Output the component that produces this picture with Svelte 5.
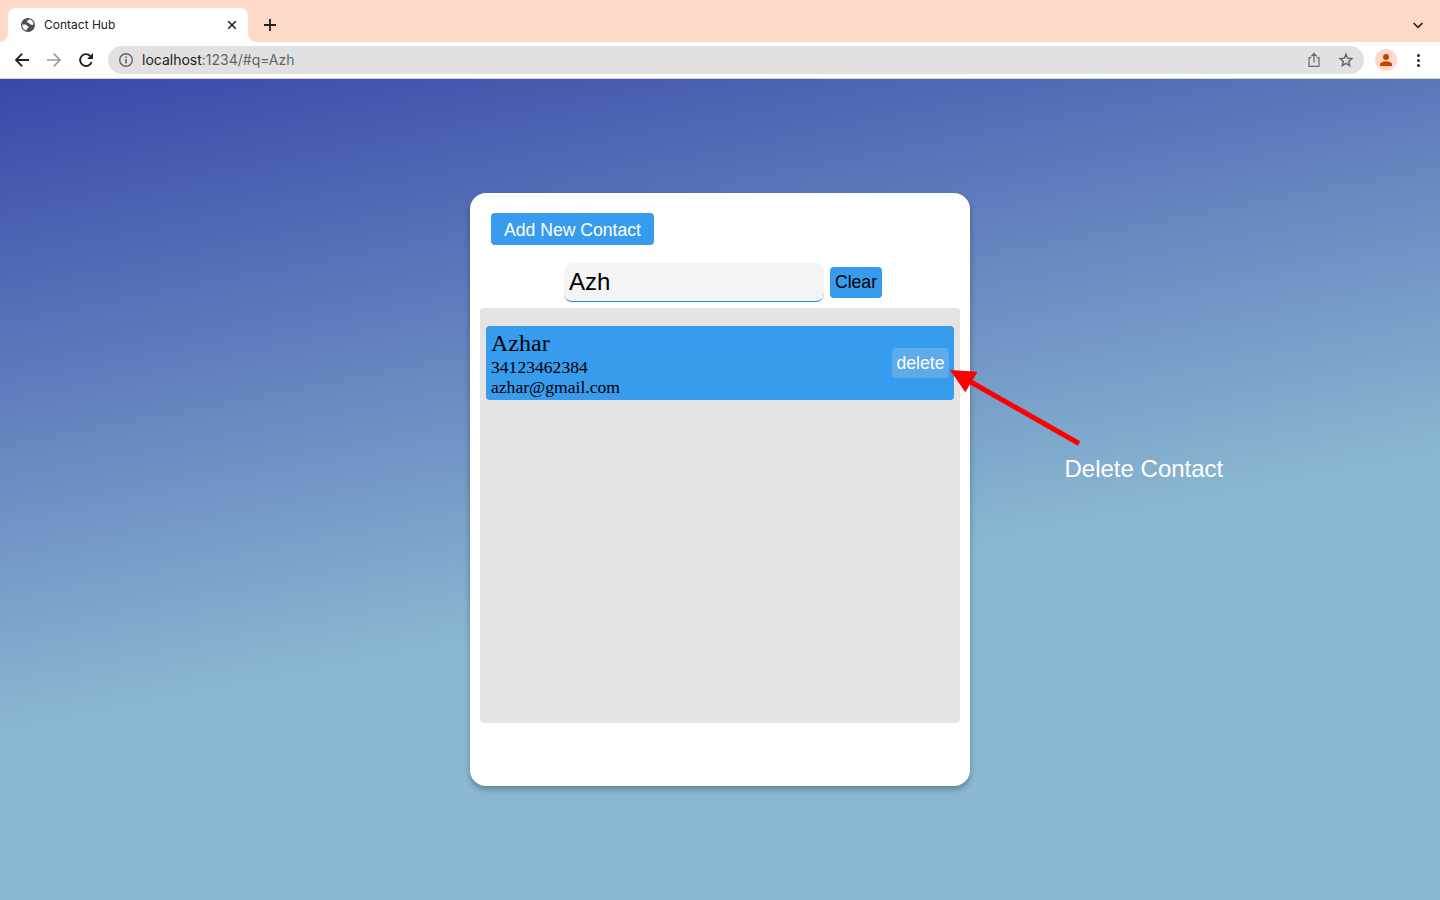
<script>
  let query = $state('Azh');
  const contact = { name: 'Azhar', phone: '34123462384', email: 'azhar@gmail.com' };
</script>

<div class="browser">
  <header class="tabs">
    <div class="tab">
      <svg class="globe" width="16" height="16" viewBox="0 0 16 16">
        <circle cx="8" cy="8" r="7" fill="#4b4e54" />
        <path d="M2.2 7.8C4 7.3 6.2 7.2 7 8.4C7.4 9.2 8.8 9 8.6 10.2C8.4 11.2 6.8 11 6.6 13.4C4 13 2 10.8 2.2 7.8ZM9.4 2.3C9.2 3.4 7 3.4 6.8 4.6C6.6 5.8 8.6 5.6 9.4 6.4C10.2 7.4 11.6 8 13.7 7.4C13.4 4.8 11.8 2.9 9.4 2.3Z" fill="#fff" />
      </svg>
      <span>Contact Hub</span>
      <svg width="16" height="16" viewBox="0 0 16 16"><path d="M4.2 4.2l7.6 7.6M11.8 4.2l-7.6 7.6" stroke="#202124" stroke-width="1.6" /></svg>
    </div>
    <svg class="plus" width="16" height="16" viewBox="0 0 16 16"><path d="M8 2v12M2 8h12" stroke="#202124" stroke-width="1.8" /></svg>
    <svg class="chevron" width="12" height="12" viewBox="0 0 12 12"><path d="M1.5 4L6 8.3L10.5 4" fill="none" stroke="#202124" stroke-width="1.6" /></svg>
  </header>

  <nav class="toolbar">
    <svg width="16" height="16" viewBox="0 0 16 16"><path d="M15 8H2.5M8.2 1.7L2 8l6.2 6.3" fill="none" stroke="#202124" stroke-width="1.8" /></svg>
    <svg width="16" height="16" viewBox="0 0 16 16"><path d="M1 8h12.5M7.8 1.7L14 8l-6.2 6.3" fill="none" stroke="#9b9b9d" stroke-width="1.7" /></svg>
    <svg width="16" height="16" viewBox="0 0 16 16"><path d="M13.6 10A5.9 5.9 0 1 1 12.3 4" fill="none" stroke="#202124" stroke-width="1.9" /><path d="M15 1v6H9Z" fill="#202124" /></svg>
    <div class="address">
      <svg width="16" height="16" viewBox="0 0 16 16"><circle cx="8" cy="8" r="6.3" fill="none" stroke="#5f6368" stroke-width="1.4" /><path d="M8 7v4.4M8 4.5v1.6" stroke="#5f6368" stroke-width="1.5" /></svg>
      <span class="url">localhost<i>:1234/#q=Azh</i></span>
      <svg width="16" height="16" viewBox="0 0 16 16"><path d="M5.3 5.7H3v8.6h10V5.7h-2.3M8 10.5V1.6M5.2 4.3L8 1.5l2.8 2.8" fill="none" stroke="#66696d" stroke-width="1.2" stroke-linejoin="round" /></svg>
      <svg width="16" height="16" viewBox="0 0 16 16"><path d="M8 2.2l1.6 4 4.3.4-3.2 2.8 1 4.2L8 11.4l-3.7 2.2 1-4.2-3.2-2.8 4.3-.4Z" fill="none" stroke="#5f6368" stroke-width="1.4" /></svg>
    </div>
    <div class="avatar"><svg width="12" height="12" viewBox="0 0 12 12"><circle cx="6" cy="3" r="3" fill="#c94100" /><path d="M0 12v-1.7C0 8.3 4 7.3 6 7.3s6 1 6 3V12Z" fill="#c94100" /></svg></div>
    <svg class="dots" width="4" height="14" viewBox="0 0 4 14"><circle cx="2.5" cy="2.5" r="1.5" /><circle cx="2.5" cy="7.5" r="1.5" /><circle cx="2.5" cy="12.5" r="1.5" /></svg>
  </nav>

  <main>
    <section class="card">
      <button class="add">Add New Contact</button>
      <div class="search">
        <input aria-label="Search contacts" bind:value={query} />
        <button class="clear">Clear</button>
      </div>
      <div class="list">
        <article>
          <div class="info">
            <span class="name">{contact.name}</span>
            <span>{contact.phone}</span>
            <span>{contact.email}</span>
          </div>
          <button class="delete">delete</button>
        </article>
      </div>
    </section>
    <svg class="arrow" width="134" height="80" viewBox="0 0 134 80"><path d="M129 73.5L20 11.5" stroke="#f00" stroke-width="5" /><path d="M0 0L27.5 1.7L15.3 22.3Z" fill="#f00" /></svg>
    <span class="note">Delete Contact</span>
  </main>
</div>

<style>
  :global(body) { overflow: hidden; }
  .browser { width: 1440px; height: 900px; display: flex; flex-direction: column; font-family: "Liberation Sans", sans-serif; }
  svg { display: block; flex: none; }
  button { border: 0; padding: 0; font-family: "Liberation Sans", sans-serif; font-size: 17.6px; border-radius: 4px; background: #379ced; color: #fff; }
  .tabs { height: 42px; flex: none; box-sizing: border-box; background: #ffd9c7; display: flex; align-items: flex-end; padding: 0 16px 0 8px; }
  .tab { position: relative; box-sizing: border-box; width: 240px; height: 34px; background: #fff; border-radius: 8px 8px 0 0; display: flex; align-items: center; padding: 0 8px 0 12px; font: 12px Inter, sans-serif; letter-spacing: 0; color: #202124; }
  .tab::before, .tab::after { content: ""; position: absolute; bottom: 0; width: 8px; height: 8px; }
  .tab::before { left: -8px; background: radial-gradient(circle at 0 0, transparent 7.5px, #fff 8px); }
  .tab::after { right: -8px; background: radial-gradient(circle at 100% 0, transparent 7.5px, #fff 8px); }
  .tab span { flex: 1; margin-left: 8px; padding-bottom: 2px; }
  .plus { margin: 0 0 9px 14px; }
  .chevron { margin: 0 0 11px auto; }
  .toolbar { height: 37px; flex: none; box-sizing: border-box; background: #fff; border-bottom: 1px solid #d2d2d2; display: flex; align-items: center; gap: 16px; padding: 0 20px 0 14px; }
  .address { flex: 1; height: 28px; margin-left: -2px; margin-right: -5px; box-sizing: border-box; border-radius: 14px; background: #e1e1e1; display: flex; align-items: center; gap: 16px; padding: 0 10px; }
  .url { flex: 1; margin-left: -8px; padding-bottom: 2px; font: 14px Inter, sans-serif; letter-spacing: 0; color: #202124; }
  .url i { font-style: normal; color: #5f6368; }
  .avatar { width: 22px; height: 22px; border-radius: 50%; background: #ffd9c7; display: flex; align-items: center; justify-content: center; }
  .dots { fill: #202124; margin-left: 3px; }
  main { position: relative; height: 821px; box-sizing: border-box; padding-top: 114px; background: linear-gradient(169deg, #3948a9 0%, #8ab8d2 60%); }
  .card { width: 500px; height: 593px; margin: 0 auto; box-sizing: border-box; padding: 20px 10px 0; background: #fff; border-radius: 16px; box-shadow: 0 3px 6px rgba(0, 0, 0, .3); }
  .add { display: block; width: 163px; height: 32px; margin-left: 11px; padding-top: 2px; }
  .search { display: flex; align-items: center; gap: 6px; margin: 18px 0 6px 84px; height: 39px; }
  input { width: 260px; height: 39px; box-sizing: border-box; padding: 0 5px; border: 0; border-bottom: 1px solid #168ae8; border-radius: 8px; background: #f4f4f4; font: 24px "Liberation Sans", sans-serif; color: #000; outline: 0; }
  .clear { width: 52px; height: 31px; color: #000; }
  .list { height: 415px; box-sizing: border-box; background: #e4e4e4; border-radius: 4px; padding: 18px 6px; }
  article { height: 74px; box-sizing: border-box; padding: 3px 5px; background: #379ced; border-radius: 4px; display: flex; align-items: center; justify-content: space-between; font-family: "Liberation Serif", serif; color: #000; }
  .info { display: flex; flex-direction: column; font-size: 17.6px; line-height: 20px; }
  .name { font-size: 24px; line-height: 27px; }
  .delete { width: 57px; height: 30px; background: #5eabeb; }
  .arrow { position: absolute; left: 950px; top: 291px; }
  .note { position: absolute; left: 1064.5px; top: 376px; font-size: 24px; line-height: 28px; color: #fff; white-space: nowrap; }
</style>
